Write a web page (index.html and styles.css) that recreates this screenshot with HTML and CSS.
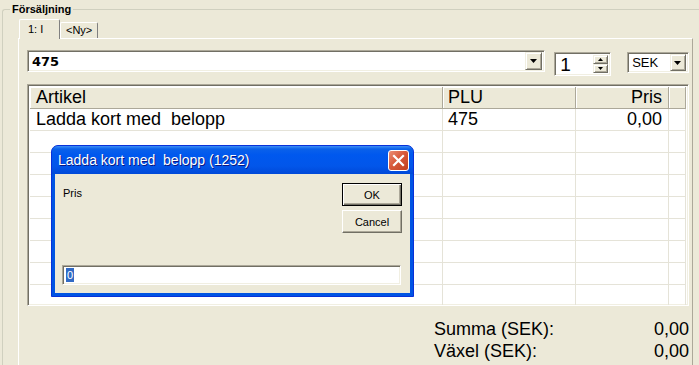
FILE: index.html
```html
<!DOCTYPE html>
<html lang="sv">
<head>
    <meta charset="UTF-8">
    <meta name="viewport" content="width=device-width, initial-scale=1.0">
    <title>Försäljning</title>
    <link rel="stylesheet" href="styles.css">
</head>
<body>
    <fieldset class="group">
        <legend>Försäljning</legend>
        <div class="tabs">
            <div class="tab active">1: I</div>
            <div class="tab">&lt;Ny&gt;</div>
        </div>
        <div class="panel">
            <div class="toolbar">
                <div class="combo article sunken">
                    <span class="combo-text">475</span>
                    <span class="drop raised"><svg width="7" height="4"><path d="M0 0h7l-3.5 4z"/></svg></span>
                </div>
                <div class="spin sunken">
                    <span class="spin-text">1</span>
                    <span class="spin-btns">
                        <span class="spin-btn raised"><svg width="5" height="3"><path d="M2.5 0l2.5 3h-5z"/></svg></span>
                        <span class="spin-btn raised"><svg width="5" height="3"><path d="M0 0h5l-2.5 3z"/></svg></span>
                    </span>
                </div>
                <div class="combo currency sunken">
                    <span class="combo-text">SEK</span>
                    <span class="drop raised"><svg width="7" height="4"><path d="M0 0h7l-3.5 4z"/></svg></span>
                </div>
            </div>

            <div class="grid sunken">
                <div class="row head">
                    <div class="cell">Artikel</div>
                    <div class="cell">PLU</div>
                    <div class="cell num">Pris</div>
                    <div class="cell"></div>
                </div>
                <div class="row">
                    <div class="cell">Ladda kort med&nbsp; belopp</div>
                    <div class="cell">475</div>
                    <div class="cell num">0,00</div>
                    <div class="cell"></div>
                </div>
                <div class="row"><div class="cell"></div><div class="cell"></div><div class="cell"></div><div class="cell"></div></div>
                <div class="row"><div class="cell"></div><div class="cell"></div><div class="cell"></div><div class="cell"></div></div>
                <div class="row"><div class="cell"></div><div class="cell"></div><div class="cell"></div><div class="cell"></div></div>
                <div class="row"><div class="cell"></div><div class="cell"></div><div class="cell"></div><div class="cell"></div></div>
                <div class="row"><div class="cell"></div><div class="cell"></div><div class="cell"></div><div class="cell"></div></div>
                <div class="row"><div class="cell"></div><div class="cell"></div><div class="cell"></div><div class="cell"></div></div>
                <div class="row"><div class="cell"></div><div class="cell"></div><div class="cell"></div><div class="cell"></div></div>
                <div class="row"><div class="cell"></div><div class="cell"></div><div class="cell"></div><div class="cell"></div></div>
            </div>

            <div class="totals">
                <span>Summa (SEK):</span><span>0,00</span>
                <span>Växel (SEK):</span><span>0,00</span>
            </div>
        </div>
    </fieldset>

    <div class="dialog">
        <div class="dialog-title">
            <span class="dialog-caption">Ladda kort med&nbsp; belopp (1252)</span>
            <span class="close">
                <svg width="19" height="19" viewBox="0 0 19 19"><path d="M5 5l9 9M14 5l-9 9" stroke="#fff" stroke-width="2.2" stroke-linecap="square"/></svg>
            </span>
        </div>
        <div class="dialog-body">
            <div class="prompt">Pris</div>
            <div class="buttons">
                <button class="btn default">OK</button>
                <button class="btn">Cancel</button>
            </div>
            <div class="edit sunken"><span class="selected">0</span></div>
        </div>
    </div>
</body>
</html>
```

FILE: styles.css
```css
body {
    margin: 0;
    width: 699px;
    height: 365px;
    overflow: hidden;
    position: relative;
    background: #ECE9D8;
    font-family: "Liberation Sans", Arial, sans-serif;
    color: #000;
}

.sunken {
    box-sizing: border-box;
    background: #fff;
    border: 1px solid;
    border-color: #ACA899 #fff #fff #ACA899;
    box-shadow: inset 1px 1px #716F64, inset -1px -1px #F1EFE2;
}
.raised {
    box-sizing: border-box;
    background: #ECE9D8;
    border: 1px solid;
    border-color: #F1EFE2 #716F64 #716F64 #F1EFE2;
    box-shadow: inset 1px 1px #fff, inset -1px -1px #ACA899;
}

/* group box */
.group {
    box-sizing: border-box;
    margin: 3px 0 0 2px;
    padding: 3px 0 0 7px;
    width: 697px;
    height: 362px;
    border: 1px solid #D0D0BF;
    border-right: 0;
    border-bottom: 0;
    border-radius: 3px 0 0 0;
}
.group legend {
    padding: 0 2px;
    font-size: 11px;
    font-weight: bold;
    line-height: 13px;
}

/* tabs */
.tabs {
    display: flex;
    align-items: flex-end;
    height: 19px;
    margin-left: 9px;
    font-size: 11px;
}
.tab {
    box-sizing: border-box;
    width: 38px;
    height: 16px;
    line-height: 15px;
    padding-left: 5px;
    border: 1px solid;
    border-color: #fff #808080 transparent #fff;
    border-bottom: 0;
    border-radius: 2px 2px 0 0;
}
.tab.active {
    width: 41px;
    height: 20px;
    line-height: 19px;
    padding-left: 8px;
    margin-bottom: -1px;
    background: #ECE9D8;
    position: relative;
}

.panel {
    box-sizing: border-box;
    margin-left: 8px;
    width: 675px;
    height: 327px;
    padding: 11px 3px 0 8px;
    border-top: 1px solid #fff;
    border-left: 1px solid #fff;
    border-right: 1px solid #ACA899;
}

/* input row */
.toolbar {
    display: flex;
    align-items: flex-start;
    height: 26px;
}
.combo {
    display: flex;
    align-items: center;
    height: 22px;
    padding: 2px;
}
.combo-text {
    flex: 1;
    padding-left: 2px;
}
.drop {
    display: flex;
    align-items: center;
    justify-content: center;
    width: 17px;
    height: 18px;
}
.article {
    width: 520px;
}
.article .combo-text {
    font-family: "DejaVu Sans", Verdana, sans-serif;
    font-weight: bold;
    font-size: 13px;
}
.spin {
    display: flex;
    margin: 2px 0 0 9px;
    width: 57px;
    height: 24px;
    padding: 2px;
}
.spin-text {
    flex: 1;
    font-size: 19px;
    line-height: 20px;
    padding-left: 3px;
}
.spin-btns {
    display: flex;
    flex-direction: column;
}
.spin-btn {
    display: flex;
    align-items: center;
    justify-content: center;
    width: 15px;
    height: 10px;
}
.currency {
    margin: 2px 0 0 16px;
    width: 62px;
    height: 21px;
    padding: 1px 2px;
    font-size: 13px;
}
.currency .drop {
    width: 16px;
    height: 17px;
}

/* article grid */
.grid {
    margin-top: 8px;
    width: 662px;
    height: 222px;
    padding: 2px;
    overflow: hidden;
    font-size: 18px;
}
.row {
    display: grid;
    grid-template-columns: 413px 133px 93px 1fr;
    height: 22px;
    line-height: 21px;
}
.cell {
    border-right: 1px solid #E5E3D8;
    border-bottom: 1px solid #E5E3D8;
    padding-left: 5px;
    white-space: nowrap;
}
.cell:first-child {
    padding-left: 6px;
}
.cell.num {
    text-align: right;
    padding: 0 6px 0 0;
}
.head .cell {
    background: #ECE9D8;
    border-right-color: #ACA899;
    border-bottom-color: #ACA899;
    box-shadow: inset 1px 1px #fff;
}

.totals {
    display: grid;
    grid-template-columns: 1fr auto;
    margin: 12px 0 0 407px;
    width: 255px;
    font-size: 18px;
    line-height: 22px;
}

/* prompt dialog */
.dialog {
    position: absolute;
    left: 51px;
    top: 145px;
    width: 363px;
    height: 152px;
    box-sizing: border-box;
    border: 1px solid #0831D9;
    border-radius: 7px 7px 0 0;
    background: #0054E3;
}
.dialog-title {
    display: flex;
    align-items: center;
    justify-content: space-between;
    height: 28px;
    padding: 0 4px 0 6px;
    border-radius: 6px 6px 0 0;
    background: linear-gradient(#3D8EF6 0, #0A61EA 3px, #0058EE 9px, #0256EA 20px, #0049D8 28px);
}
.dialog-caption {
    color: #fff;
    font-size: 14px;
    text-shadow: 1px 1px #0A1883;
}
.close {
    box-sizing: border-box;
    width: 21px;
    height: 21px;
    border: 1px solid #fff;
    border-radius: 3px;
    background: linear-gradient(135deg, #EB8F76, #D85A3B 45%, #C0401F);
}
.close svg {
    display: block;
}
.dialog-body {
    display: grid;
    grid-template-columns: 1fr 60px;
    grid-template-rows: 1fr auto;
    height: 119px;
    box-sizing: border-box;
    margin: 0 3px;
    padding: 9px 8px 8px 7px;
    background: #ECE9D8;
    font-size: 11px;
}
.prompt {
    padding: 4px 0 0 1px;
}
.buttons {
    display: flex;
    flex-direction: column;
    gap: 4px;
}
.btn {
    height: 23px;
    padding: 0;
    background: #ECE9D8;
    border: 1px solid;
    border-color: #fff #716F64 #716F64 #fff;
    box-shadow: inset -1px -1px #ACA899;
    font-family: "Liberation Sans", Arial, sans-serif;
    font-size: 11px;
    color: #000;
}
.btn.default {
    border-color: #000;
    box-shadow: inset 1px 1px #fff, inset -1px -1px #716F64, inset -2px -2px #ACA899;
}
.edit {
    grid-column: 1 / span 2;
    height: 20px;
    margin-right: 1px;
    padding: 2px 0 0 3px;
    line-height: 14px;
}
.selected {
    display: inline-block;
    background: #316AC5;
    color: #fff;
    padding: 0 1px;
}
```
